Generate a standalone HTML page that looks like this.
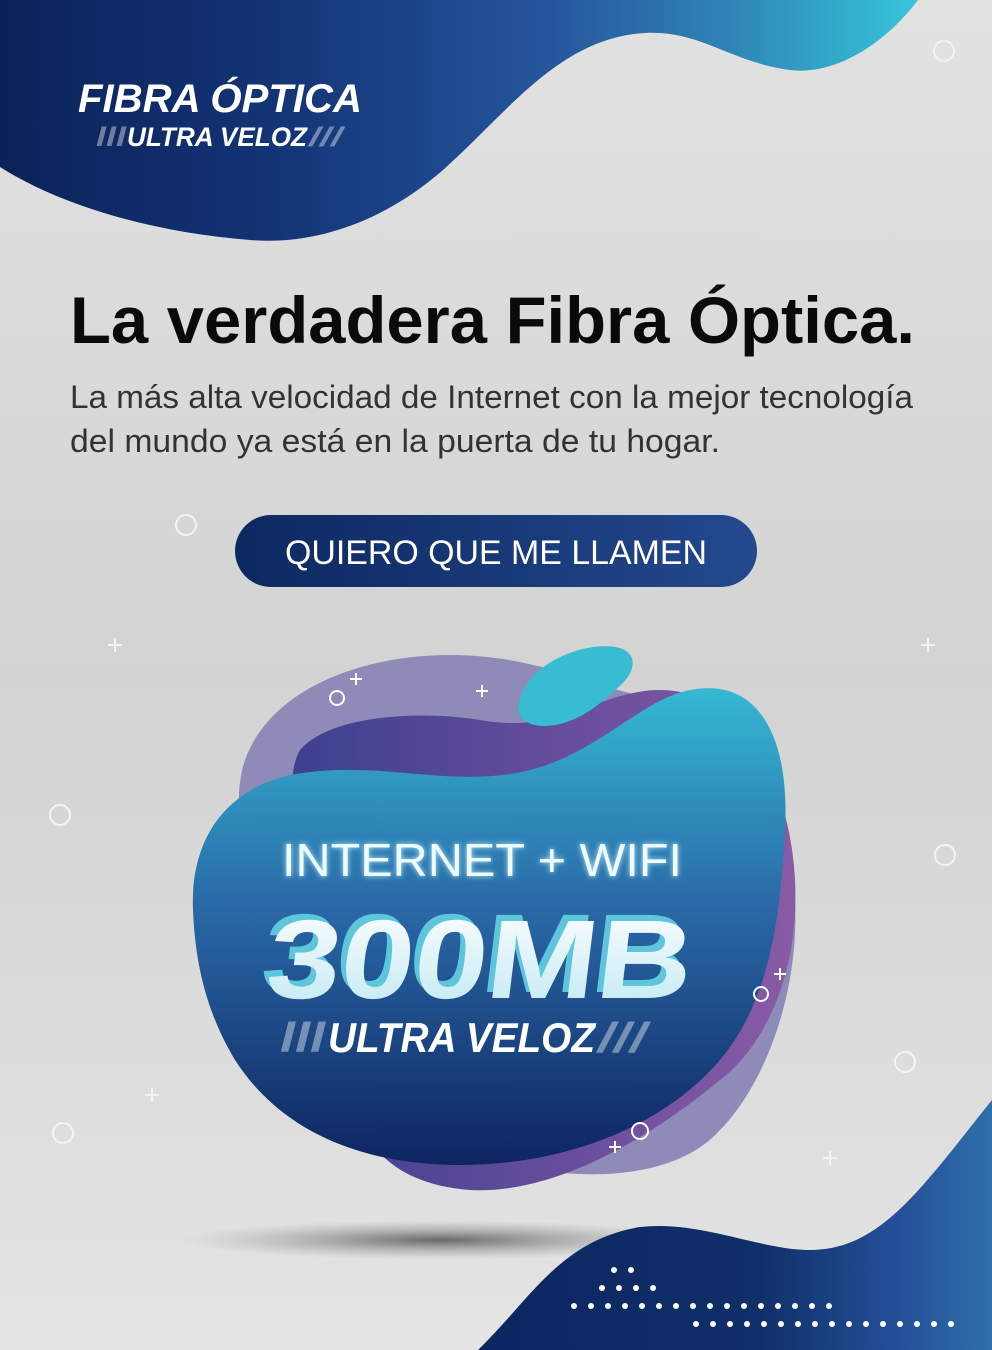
<!DOCTYPE html>
<html><head><meta charset="utf-8"><style>
html,body{margin:0;padding:0;width:992px;height:1350px;overflow:hidden;background:#ddd}
svg{display:block}
</style></head><body>
<svg width="992" height="1350" viewBox="0 0 992 1350" xmlns="http://www.w3.org/2000/svg">
<defs>
<linearGradient id="bg" x1="0" y1="0" x2="0" y2="1">
<stop offset="0" stop-color="#e2e2e2"/><stop offset="0.5" stop-color="#d3d3d3"/><stop offset="1" stop-color="#e4e4e4"/>
</linearGradient>
<linearGradient id="top" x1="0" y1="0" x2="1" y2="0">
<stop offset="0" stop-color="#0b2259"/><stop offset="0.3" stop-color="#133476"/><stop offset="0.6" stop-color="#25569c"/><stop offset="0.8" stop-color="#2f86b8"/><stop offset="1" stop-color="#36c6da"/>
</linearGradient>
<linearGradient id="btn" x1="0" y1="0" x2="1" y2="0">
<stop offset="0" stop-color="#0c2860"/><stop offset="1" stop-color="#24498f"/>
</linearGradient>
<linearGradient id="main" x1="0" y1="0" x2="0" y2="1">
<stop offset="0" stop-color="#35b9d3"/><stop offset="0.45" stop-color="#2a6aa8"/><stop offset="1" stop-color="#0e2560"/>
</linearGradient>
<linearGradient id="purp" x1="0" y1="0" x2="1" y2="0">
<stop offset="0" stop-color="#3d3f90"/><stop offset="1" stop-color="#8a5aa6"/>
</linearGradient>
<linearGradient id="bot" x1="0" y1="0" x2="1" y2="0">
<stop offset="0" stop-color="#0c2560"/><stop offset="0.55" stop-color="#10306a"/><stop offset="0.8" stop-color="#234d95"/><stop offset="1" stop-color="#2e6fab"/>
</linearGradient>
<linearGradient id="txt" x1="0" y1="0" x2="0" y2="1">
<stop offset="0" stop-color="#ffffff"/><stop offset="1" stop-color="#bfe8f2"/>
</linearGradient>
<radialGradient id="sh" cx="0.5" cy="0.5" r="0.5">
<stop offset="0" stop-color="#333" stop-opacity="0.7"/><stop offset="1" stop-color="#888" stop-opacity="0"/>
</radialGradient>
<filter id="glow" x="-10%" y="-30%" width="120%" height="160%"><feGaussianBlur stdDeviation="3"/></filter>
</defs>
<rect width="992" height="1350" fill="url(#bg)"/>
<path d="M0 0 L918 0 C880 50 830 75 790 70 C730 62 700 30 645 33 C560 38 510 110 443 170 C380 225 310 245 250 240 C150 232 60 205 0 167 Z" fill="url(#top)"/>
<circle cx="944" cy="51" r="10" fill="none" stroke="#f2f2f2" stroke-width="2"/>
<g font-family="'Liberation Sans',sans-serif" font-weight="bold" font-style="italic" fill="#fff">
<text x="78" y="112" font-size="40" textLength="284" lengthAdjust="spacingAndGlyphs">FIBRA ÓPTICA</text>
<text x="96" y="146" font-size="27" opacity="0.4" textLength="30" lengthAdjust="spacingAndGlyphs">lll</text>
<text x="127" y="146" font-size="27" textLength="180" lengthAdjust="spacingAndGlyphs">ULTRA VELOZ</text>
<text x="309" y="146" font-size="27" opacity="0.4" textLength="33" lengthAdjust="spacingAndGlyphs">///</text>
</g>
<text x="70" y="343" font-family="'Liberation Sans',sans-serif" font-weight="bold" font-size="66" fill="#0a0a0a" textLength="845" lengthAdjust="spacingAndGlyphs">La verdadera Fibra Óptica.</text>
<g font-family="'Liberation Sans',sans-serif" font-size="32" fill="#333">
<text x="70" y="408" textLength="843" lengthAdjust="spacingAndGlyphs">La más alta velocidad de Internet con la mejor tecnología</text>
<text x="70" y="452" textLength="650" lengthAdjust="spacingAndGlyphs">del mundo ya está en la puerta de tu hogar.</text>
</g>
<rect x="235" y="515" width="522" height="72" rx="36" fill="url(#btn)"/>
<text x="285" y="564" font-family="'Liberation Sans',sans-serif" font-size="34" fill="#fff" textLength="422" lengthAdjust="spacingAndGlyphs">QUIERO QUE ME LLAMEN</text>
<g fill="none" stroke="#f4f4f4" stroke-width="2">
<circle cx="186" cy="525" r="10"/><circle cx="60" cy="815" r="10"/><circle cx="945" cy="855" r="10"/><circle cx="905" cy="1062" r="10"/><circle cx="63" cy="1133" r="10"/>
<path d="M108 645h14M115 638v14M921 645h14M928 638v14M145 1095h14M152 1088v14M823 1158h14M830 1151v14"/>
</g>
<ellipse cx="440" cy="1240" rx="260" ry="20" fill="url(#sh)"/>
<path d="M245 760 C270 690 360 655 450 655 C540 655 600 690 660 700 C740 720 790 800 795 900 C800 1000 760 1090 720 1130 C680 1175 600 1180 540 1170 C470 1160 400 1170 370 1120 C300 1000 215 850 245 760 Z" fill="#8f8bb8"/>
<path d="M300 750 C330 715 420 710 480 720 C560 735 600 690 660 690 C740 690 790 780 795 880 C800 980 760 1050 720 1080 C660 1130 560 1195 470 1190 C400 1185 370 1150 360 1120 C330 1000 270 800 300 750 Z" fill="url(#purp)"/>
<path d="M520 700 C530 660 590 640 620 648 C640 655 635 675 615 690 C590 715 560 730 535 725 C520 722 515 712 520 700 Z" fill="#38bcd2"/>
<path d="M193 910 C190 840 225 790 290 775 C380 758 450 790 530 770 C600 752 640 700 690 690 C760 676 790 740 785 830 C780 920 770 1000 720 1060 C660 1130 560 1165 460 1165 C360 1165 280 1130 235 1060 C205 1010 195 960 193 910 Z" fill="url(#main)"/>
<g fill="none" stroke="#fff" stroke-width="2">
<circle cx="337" cy="698" r="7"/><path d="M350 679h12M356 673v12M476 691h12M482 685v12"/>
<circle cx="761" cy="994" r="7"/><path d="M774 974h12M780 968v12"/>
<circle cx="640" cy="1131" r="8"/><path d="M609 1147h12M615 1141v12"/>
</g>
<g font-family="'Liberation Sans',sans-serif">
<text x="282" y="876" font-size="46" fill="#bfefff" filter="url(#glow)" textLength="400" lengthAdjust="spacingAndGlyphs">INTERNET + WIFI</text>
<text x="282" y="876" font-size="46" fill="#eefbff" textLength="400" lengthAdjust="spacingAndGlyphs">INTERNET + WIFI</text>
<g transform="skewX(-7) translate(122,0)">
<text x="258" y="992" font-size="112" font-weight="bold" fill="#5ec6dc" textLength="425" lengthAdjust="spacingAndGlyphs">300MB</text>
<text x="264" y="998" font-size="112" font-weight="bold" fill="url(#txt)" textLength="425" lengthAdjust="spacingAndGlyphs">300MB</text>
</g>
</g>
<g font-family="'Liberation Sans',sans-serif" font-weight="bold" font-style="italic" fill="#fff">
<text x="280" y="1052" font-size="42" opacity="0.4" textLength="45" lengthAdjust="spacingAndGlyphs">lll</text>
<text x="328" y="1052" font-size="42" textLength="267" lengthAdjust="spacingAndGlyphs">ULTRA VELOZ</text>
<text x="598" y="1052" font-size="42" opacity="0.4" textLength="48" lengthAdjust="spacingAndGlyphs">///</text>
</g>
<path d="M478 1350 C530 1300 560 1240 640 1227 C700 1220 760 1250 810 1250 C880 1250 920 1190 992 1100 L992 1350 Z" fill="url(#bot)"/>
<g fill="#fff">
<circle cx="614" cy="1270" r="3"/><circle cx="631" cy="1270" r="3"/>
<circle cx="602" cy="1288" r="3"/><circle cx="619" cy="1288" r="3"/><circle cx="636" cy="1288" r="3"/><circle cx="653" cy="1288" r="3"/>
<circle cx="574" cy="1306" r="3"/><circle cx="591" cy="1306" r="3"/><circle cx="608" cy="1306" r="3"/><circle cx="625" cy="1306" r="3"/><circle cx="642" cy="1306" r="3"/><circle cx="659" cy="1306" r="3"/><circle cx="676" cy="1306" r="3"/><circle cx="693" cy="1306" r="3"/><circle cx="710" cy="1306" r="3"/><circle cx="727" cy="1306" r="3"/><circle cx="744" cy="1306" r="3"/><circle cx="761" cy="1306" r="3"/><circle cx="778" cy="1306" r="3"/><circle cx="795" cy="1306" r="3"/><circle cx="812" cy="1306" r="3"/><circle cx="829" cy="1306" r="3"/>
<circle cx="696" cy="1324" r="3"/><circle cx="713" cy="1324" r="3"/><circle cx="730" cy="1324" r="3"/><circle cx="747" cy="1324" r="3"/><circle cx="764" cy="1324" r="3"/><circle cx="781" cy="1324" r="3"/><circle cx="798" cy="1324" r="3"/><circle cx="815" cy="1324" r="3"/><circle cx="832" cy="1324" r="3"/><circle cx="849" cy="1324" r="3"/><circle cx="866" cy="1324" r="3"/><circle cx="883" cy="1324" r="3"/><circle cx="900" cy="1324" r="3"/><circle cx="917" cy="1324" r="3"/><circle cx="934" cy="1324" r="3"/><circle cx="951" cy="1324" r="3"/>
</g>
</svg>
</body></html>
